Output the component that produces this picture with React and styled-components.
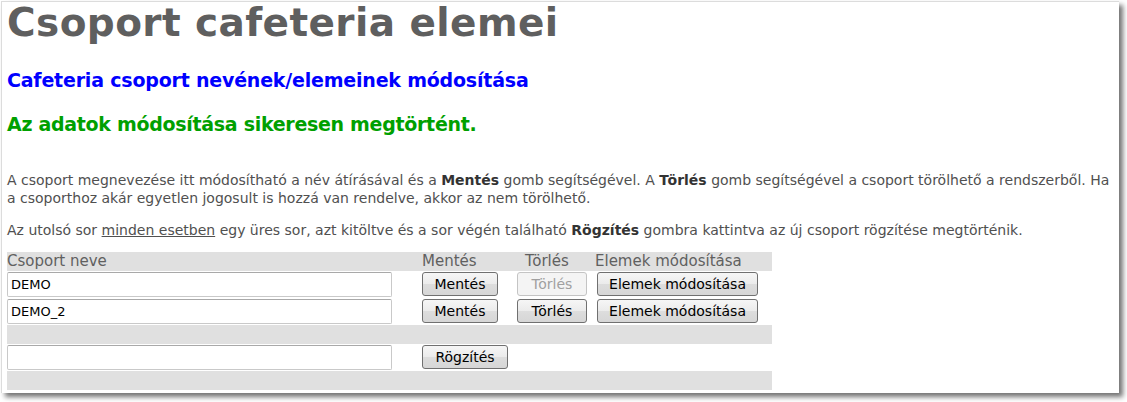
import React from "react";
import styled, { createGlobalStyle } from "styled-components";

const Global = createGlobalStyle`
  html, body { margin: 0; padding: 0; background: #ffffff; }
  body { font-family: "DejaVu Sans", Verdana, sans-serif; }
  #root { min-height: 402px; }
`;

const Panel = styled.div`
  margin: 1px 0 0 1px;
  width: 1118px;
  height: 392px;
  background: #ffffff;
  border-top: 1px solid #dcdcdc;
  border-left: 1px solid #dcdcdc;
  box-shadow: 4px 4px 5px rgba(0, 0, 0, 0.55);
  padding: 0 0 0 5px;
  box-sizing: border-box;
  display: flex;
  flex-direction: column;
`;

const Title = styled.h1`
  margin: 0;
  font-weight: bold;
  font-size: 39px;
  line-height: 41px;
  letter-spacing: 0.4px;
  color: #5f5f5f;
`;

const SubTitle = styled.h2`
  margin: ${(p) => p.$top}px 0 0 0;
  font-weight: bold;
  font-size: 19px;
  line-height: 24px;
  letter-spacing: ${(p) => p.$ls}px;
  color: ${(p) => p.$color};
`;

const Para = styled.p`
  margin: ${(p) => p.$top}px 0 0 0;
  font-size: 14px;
  line-height: 18px;
  color: #505050;
`;

const Strong = styled.b`
  color: #333333;
`;

const Under = styled.span`
  text-decoration: underline;
`;

const Table = styled.div`
  margin-top: 12.8px;
  width: 765px;
  display: flex;
  flex-direction: column;
`;

const Row = styled.div`
  display: grid;
  grid-template-columns: 413px 95px 80px 177px;
  height: ${(p) => p.$h}px;
  background: ${(p) => (p.$gray ? "#e0e0e0" : "#ffffff")};
  align-items: start;
`;

const HeadCell = styled.div`
  padding-left: ${(p) => p.$pad || 0}px;
  font-size: 15px;
  line-height: 19px;
  color: #606060;
  white-space: nowrap;
`;

const Cell = styled.div`
  padding: 1px 0 0 ${(p) => p.$pad || 0}px;
`;

const TextInput = styled.input`
  box-sizing: border-box;
  width: 385px;
  height: 25px;
  margin: 0;
  padding: 0 3px;
  border: 1px solid #c9c9c9;
  border-top-color: #a9a9a9;
  border-radius: 2px;
  font-family: "DejaVu Sans", Verdana, sans-serif;
  font-size: 13px;
  color: #000000;
  background: #ffffff;
  outline: none;
`;

const Button = styled.button`
  box-sizing: border-box;
  width: ${(p) => p.$w}px;
  height: 24px;
  margin: 0;
  padding: 0;
  border: 1px solid ${(p) => (p.disabled ? "#c4c4c4" : "#707070")};
  border-radius: 3px;
  background: ${(p) =>
    p.disabled
      ? "#f4f4f4"
      : "linear-gradient(#f6f6f6 0%, #ebebeb 50%, #dddddd 51%, #d6d6d6 100%)"};
  font-family: "DejaVu Sans", Verdana, sans-serif;
  font-size: 14px;
  color: ${(p) => (p.disabled ? "#a0a0a0" : "#000000")};
  white-space: nowrap;
`;

const rows = [
  { name: "DEMO", canDelete: false },
  { name: "DEMO_2", canDelete: true },
];

export default function App() {
  return (
    <>
      <Global />
      <Panel>
        <Title>Csoport cafeteria elemei</Title>
        <SubTitle $top={25} $ls={-0.2} $color="#0000ff">
          Cafeteria csoport nevének/elemeinek módosítása
        </SubTitle>
        <SubTitle $top={20} $ls={-0.3} $color="#00a000">
          Az adatok módosítása sikeresen megtörtént.
        </SubTitle>
        <Para $top={34.5}>
          A csoport megnevezése itt módosítható a név átírásával és a <Strong>Mentés</Strong> gomb
          segítségével. A <Strong>Törlés</Strong> gomb segítségével a csoport törölhető a rendszerből. Ha
          a csoporthoz akár egyetlen jogosult is hozzá van rendelve, akkor az nem törölhető.
        </Para>
        <Para $top={14.5}>
          Az utolsó sor <Under>minden esetben</Under> egy üres sor, azt kitöltve és a sor végén található{" "}
          <Strong>Rögzítés</Strong> gombra kattintva az új csoport rögzítése megtörténik.
        </Para>
        <Table>
          <Row $gray $h={19}>
            <HeadCell>Csoport neve</HeadCell>
            <HeadCell $pad={2}>Mentés</HeadCell>
            <HeadCell $pad={10}>Törlés</HeadCell>
            <HeadCell>Elemek módosítása</HeadCell>
          </Row>
          {rows.map((r) => (
            <Row key={r.name} $h={27}>
              <Cell>
                <TextInput defaultValue={r.name} />
              </Cell>
              <Cell $pad={2}>
                <Button $w={76}>Mentés</Button>
              </Cell>
              <Cell $pad={2}>
                <Button $w={70} disabled={!r.canDelete}>
                  Törlés
                </Button>
              </Cell>
              <Cell $pad={2}>
                <Button $w={161}>Elemek módosítása</Button>
              </Cell>
            </Row>
          ))}
          <Row $gray $h={19} />
          <Row $h={27}>
            <Cell>
              <TextInput defaultValue="" />
            </Cell>
            <Cell $pad={2}>
              <Button $w={86}>Rögzítés</Button>
            </Cell>
          </Row>
          <Row $gray $h={19} />
        </Table>
      </Panel>
    </>
  );
}
